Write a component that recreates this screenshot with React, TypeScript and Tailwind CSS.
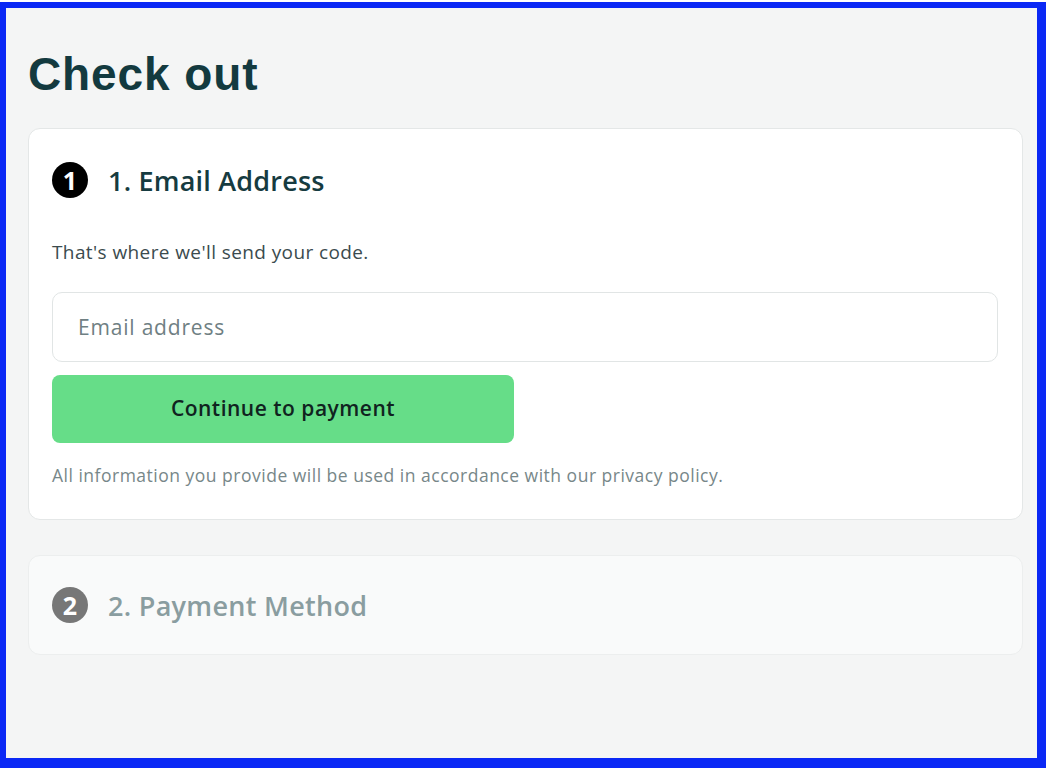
export default function App() {
  return (
    <div className="w-[1046px] h-[768px] bg-white pt-[2px]" style={{ fontFamily: "'Open Sans', 'Liberation Sans', sans-serif" }}>
      <div className="h-[766px] border-t-[6px] border-l-[6px] border-r-[9px] border-b-[10px] border-[#0a28f5]">
        <div className="h-full bg-[#f4f5f5] pl-[22px] pr-[14px] pt-[43px]">
          <h1
            className="text-[46px] leading-none font-bold text-[#133a3f] tracking-[0.9px]"
            style={{ fontFamily: "'Liberation Sans', Arial, sans-serif" }}
          >
            Check out
          </h1>

          <section className="mt-[31px] rounded-xl border border-[#e4e7e7] bg-white pl-[23px] pr-[24px] pt-[33px] pb-[32px]">
            <div className="flex h-[36px] items-center gap-[20px]">
              <span className="flex h-[36px] w-[36px] items-center justify-center rounded-full bg-black text-[25px] leading-none font-bold text-white">
                1
              </span>
              <h2 className="text-[27px] leading-none font-semibold tracking-[0.2px] text-[#163b40]">1. Email Address</h2>
            </div>

            <p className="mt-[42px] text-[19px] leading-[24px] tracking-[0.4px] text-[#3b4b4e]">That's where we'll send your code.</p>

            <input
              type="email"
              placeholder="Email address"
              className="mt-[28px] block h-[70px] w-full rounded-[10px] border border-[#e1e5e5] bg-white px-[25px] text-[21px] tracking-[0.8px] text-[#163b40] placeholder:text-[#6f8083] outline-none"
            />

            <button
              type="button"
              className="mt-[13px] h-[68px] w-[462px] rounded-[8px] bg-[#66dd88] text-[21px] font-semibold tracking-[0.5px] text-[#10231f]"
            >
              Continue to payment
            </button>

            <p className="mt-[20px] text-[17.5px] leading-[24px] tracking-[0.5px] text-[#778789]">
              All information you provide will be used in accordance with our privacy policy.
            </p>
          </section>

          <section className="mt-[35px] rounded-xl border border-[#eceeee] bg-[#f9fafa] pl-[23px] pr-[24px] py-[31px]">
            <div className="flex h-[36px] items-center gap-[20px]">
              <span className="flex h-[36px] w-[36px] items-center justify-center rounded-full bg-[#777777] text-[25px] leading-none font-bold text-white">
                2
              </span>
              <h2 className="text-[27px] leading-none font-semibold tracking-[0.3px] text-[#8a9da0]">2. Payment Method</h2>
            </div>
          </section>
        </div>
      </div>
    </div>
  );
}
